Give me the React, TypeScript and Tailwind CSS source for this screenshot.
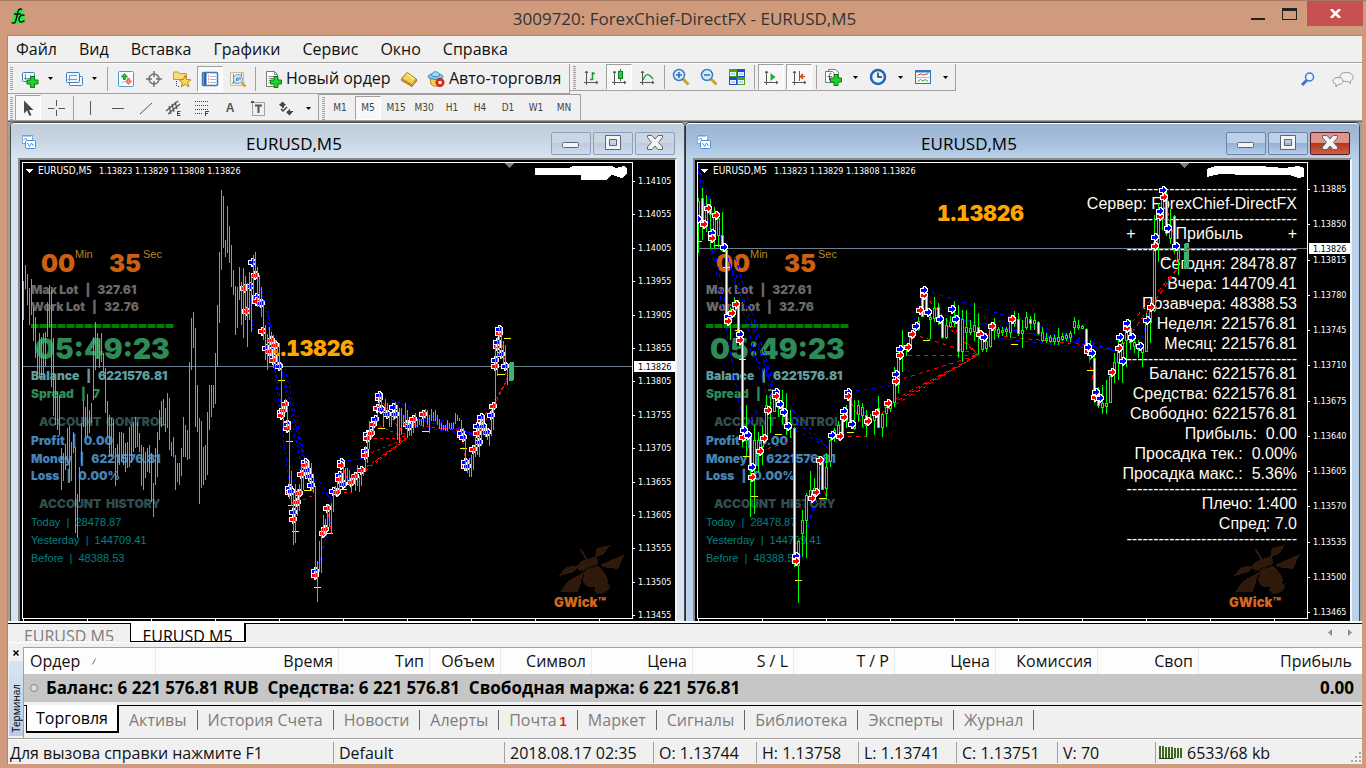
import React from "react";

const UI = "font-['Open_Sans','Noto_Sans',sans-serif]";
const TINY = "font-['DejaVu_Sans_Condensed','DejaVu_Sans',sans-serif]";

/* ------------------------------------------------------------------ */
/* Chart data                                                          */
/* ------------------------------------------------------------------ */

type Tone = "b" | "r";
type Candle = [hi: number, lo: number, top?: number, bottom?: number, filled?: number];

/* High/low pairs of the older bars, two pixels apart */
const HISTORY: [number, number][] = [
  [281, 320], [265, 289], [274, 305], [288, 325], [279, 315], [307, 341], [317, 358], [348, 378], [333, 378], [337, 378],
  [333, 375], [332, 367], [302, 337], [285, 327], [290, 387], [338, 416], [380, 425], [391, 430], [395, 435], [448, 490],
  [453, 481], [444, 470], [428, 463], [426, 482], [442, 481], [432, 453], [447, 533], [494, 538], [467, 502], [423, 463],
  [401, 427], [407, 438], [394, 437], [410, 433], [403, 423], [337, 400], [322, 370], [333, 358], [340, 368], [333, 362],
  [353, 372], [368, 413], [401, 437], [415, 457], [418, 457], [420, 455], [448, 486], [444, 476], [432, 465], [432, 462],
  [433, 465], [443, 472], [442, 468], [427, 467], [425, 462], [422, 452], [417, 448], [422, 447], [433, 452], [445, 486],
  [447, 490], [452, 478], [448, 472], [445, 473], [453, 502], [483, 517], [448, 485], [432, 477], [410, 440], [401, 427],
  [399, 425], [408, 432], [393, 428], [398, 450], [442, 456], [437, 457], [455, 490], [463, 482], [463, 485], [448, 476],
  [417, 457], [425, 457], [430, 460], [362, 459], [318, 370], [312, 348], [328, 427], [385, 432], [418, 504], [421, 488],
  [447, 485], [445, 480], [412, 475], [385, 430], [385, 417], [385, 408], [353, 404], [305, 367], [252, 323], [190, 270],
  [196, 248], [240, 257], [206, 253], [226, 263], [245, 287], [270, 295], [286, 335], [287, 328], [267, 300], [282, 325],
  [268, 338], [276, 320], [283, 347], [272, 320], [275, 332], [255, 300], [252, 277], [267, 307], [275, 307], [287, 317],
  [300, 340], [325, 360],
];

/* Recent candles, four pixels apart on the wide chart */
const CANDLES: Candle[] = [
  [198, 253, 201, 222], [188, 240, 198, 222, 1], [195, 232, 208, 226], [199, 249, 206, 214, 1], [207, 249, 214, 236],
  [212, 247, 218, 235], [212, 252, 235, 250, 1], [245, 320, 250, 316, 1], [307, 340, 310, 320], [297, 317, 302, 312],
  [300, 342, 303, 340, 1], [333, 447, 338, 428, 1], [405, 457, 430, 440], [435, 517, 437, 470, 1], [425, 514, 440, 465],
  [432, 472, 440, 450], [425, 465, 438, 446], [395, 440, 405, 438], [398, 433, 408, 412], [390, 412, 395, 411],
  [392, 417, 396, 407, 1], [390, 425, 402, 414, 1], [393, 435, 410, 427, 1], [410, 438, 425, 428], [427, 567, 428, 562, 1],
  [540, 603, 541, 565], [510, 557, 520, 533], [493, 558, 495, 520], [471, 501, 490, 497], [478, 500, 488, 494],
  [456, 492, 462, 490], [457, 490, 460, 489, 1], [453, 500, 467, 488], [435, 467, 440, 461], [428, 442, 430, 437],
  [421, 440, 425, 436], [411, 437, 415, 433, 1], [405, 428, 409, 420], [395, 427, 397, 423, 1], [400, 430, 423, 428],
  [400, 422, 405, 414], [403, 427, 407, 415], [410, 437, 415, 425, 1], [414, 424, 418, 420], [411, 435, 413, 420],
  [396, 428, 408, 427, 1], [413, 437, 414, 427], [403, 427, 407, 413], [400, 412, 403, 408], [367, 407, 372, 402],
  [350, 393, 355, 384], [330, 372, 345, 349], [344, 356, 347, 349], [333, 350, 337, 345], [326, 338, 329, 333],
  [317, 331, 321, 329], [287, 317, 296, 316, 1], [288, 313, 294, 311, 1], [311, 339, 317, 319], [297, 322, 308, 318],
  [303, 325, 307, 319, 1], [316, 339, 319, 337, 1], [318, 339, 325, 337], [316, 328, 322, 326], [301, 327, 316, 322],
  [305, 358, 318, 351, 1], [310, 362, 319, 351], [310, 350, 327, 332], [320, 335, 328, 332], [303, 341, 325, 331],
  [313, 355, 327, 333, 1], [333, 352, 338, 349], [333, 352, 341, 348], [323, 348, 327, 346], [318, 340, 326, 330],
  [327, 338, 329, 333], [327, 336, 330, 332], [327, 336, 329, 331], [317, 338, 320, 332], [311, 327, 318, 323],
  [313, 336, 319, 333, 1], [320, 348, 330, 333], [312, 330, 317, 327], [316, 330, 319, 323, 1], [313, 330, 320, 323],
  [321, 335, 322, 333, 1], [327, 342, 332, 340], [333, 343, 338, 340], [335, 343, 337, 341], [335, 345, 338, 341],
  [328, 345, 337, 341], [333, 341, 336, 339], [333, 341, 335, 338], [331, 342, 333, 337], [317, 334, 321, 327],
  [320, 330, 325, 327], [325, 329, 326, 328], [328, 350, 329, 347, 1], [340, 360, 345, 358], [353, 403, 358, 399, 1],
  [387, 408, 393, 405, 1], [385, 414, 403, 407], [380, 414, 403, 406], [370, 403, 376, 402], [353, 383, 362, 372],
  [337, 380, 345, 362], [337, 383, 343, 362], [322, 367, 328, 340], [320, 350, 328, 342, 1], [337, 353, 342, 346],
  [340, 358, 345, 349], [346, 367, 347, 352], [313, 352, 320, 351], [307, 343, 308, 322], [215, 312, 242, 310],
  [203, 262, 213, 243], [188, 230, 196, 218], [188, 236, 194, 233, 1], [209, 244, 225, 238], [215, 253, 216, 247, 1],
  [243, 275, 250, 259],
];

const MARKERS: [number, number, Tone][] = [
  [698, 219, "b"], [708, 208, "r"], [716, 215, "r"], [704, 224, "r"], [712, 233, "b"], [712, 238, "r"], [724, 247, "b"],
  [728, 316, "b"], [728, 321, "r"], [732, 313, "r"], [736, 304, "r"], [740, 334, "b"], [740, 340, "r"], [743, 437, "r"],
  [744, 430, "b"], [748, 435, "b"], [752, 467, "b"], [752, 477, "r"], [760, 451, "r"], [764, 438, "r"], [768, 410, "r"],
  [776, 392, "b"], [776, 396, "r"], [780, 404, "b"], [784, 412, "b"], [788, 426, "b"], [796, 556, "b"], [796, 561, "r"],
  [812, 498, "r"], [816, 492, "r"], [820, 460, "r"], [832, 435, "b"], [840, 436, "r"], [844, 411, "b"], [844, 417, "r"],
  [848, 392, "b"], [848, 396, "r"], [852, 424, "b"], [868, 421, "r"], [876, 413, "r"], [888, 403, "r"], [896, 374, "b"],
  [896, 381, "r"], [900, 349, "b"], [900, 355, "r"], [908, 347, "r"], [912, 334, "r"], [916, 326, "b"], [920, 310, "r"],
  [924, 295, "r"], [924, 290, "b"], [928, 312, "b"], [940, 319, "b"], [952, 309, "b"], [956, 319, "b"], [980, 334, "r"],
  [984, 337, "b"], [992, 326, "r"], [1012, 319, "r"], [1088, 351, "r"], [1088, 347, "b"], [1092, 353, "b"],
  [1095, 397, "r"], [1096, 392, "b"], [1100, 398, "b"], [1112, 372, "r"], [1123, 361, "b"], [1119, 348, "r"],
  [1120, 337, "b"], [1127, 328, "r"], [1127, 323, "b"], [1132, 337, "b"], [1140, 346, "b"], [1147, 320, "b"],
  [1151, 307, "r"], [1155, 246, "r"], [1155, 237, "b"], [1160, 216, "r"], [1160, 211, "b"], [1164, 197, "r"],
  [1163, 190, "b"], [1168, 228, "b"], [1176, 246, "b"],
];

const EARLY_MARKERS: [number, number, Tone][] = [
  [252, 262, "b"], [255, 275, "r"], [244, 288, "r"], [250, 286, "b"], [246, 311, "r"], [256, 297, "b"], [256, 301, "r"],
  [261, 303, "b"], [262, 331, "r"],
];

const TRADES: [number, number, number, number, Tone][] = [
  [698, 165, 724, 247, "b"], [700, 180, 728, 316, "b"], [698, 170, 744, 430, "b"], [733, 250, 776, 392, "b"],
  [727, 255, 772, 388, "b"], [736, 275, 774, 390, "b"], [740, 334, 770, 380, "b"], [728, 258, 768, 400, "b"],
  [776, 392, 828, 448, "b"], [784, 412, 828, 448, "b"], [788, 426, 826, 446, "b"], [772, 392, 744, 430, "b"],
  [796, 556, 826, 480, "b"], [800, 558, 828, 448, "b"], [848, 392, 896, 385, "b"], [852, 424, 884, 394, "b"],
  [924, 290, 1118, 351, "b"], [928, 312, 1118, 351, "b"], [952, 309, 1118, 351, "b"], [956, 319, 1116, 351, "b"],
  [984, 337, 1116, 351, "b"], [900, 349, 926, 296, "b"], [1100, 398, 1120, 352, "b"], [1140, 346, 1150, 310, "b"],
  [760, 451, 792, 441, "r"], [770, 400, 792, 438, "r"], [744, 432, 752, 470, "r"], [812, 498, 826, 500, "r"],
  [820, 460, 826, 500, "r"], [840, 436, 867, 436, "r"], [848, 396, 867, 434, "r"], [924, 295, 978, 355, "r"],
  [940, 319, 978, 355, "r"], [912, 334, 978, 355, "r"], [900, 355, 978, 355, "r"], [896, 381, 978, 355, "r"],
  [888, 403, 978, 355, "r"], [884, 408, 978, 355, "r"], [868, 421, 978, 355, "r"], [980, 334, 1088, 345, "r"],
  [1088, 351, 1096, 398, "r"], [1127, 328, 1178, 268, "r"], [1123, 345, 1178, 268, "r"], [1151, 307, 1178, 268, "r"],
  [1164, 197, 1176, 246, "r"], [1168, 228, 1178, 268, "r"],
];

const LEVELS: [number, number][] = [
  [698, 241], [717, 245], [726, 267], [738, 330], [742, 359], [926, 340], [1014, 344], [778, 434], [746, 456],
  [754, 496], [798, 580], [850, 432], [822, 498], [1090, 370], [1166, 259],
];

const COLORS = { b: "#0000ff", r: "#ff0000" } as const;

/* Wide-chart coordinates to the two-pixel chart's coordinates */
const nx = (x: number) => Math.round(507 - (1178 - x) / 2);
const ny = (y: number) => Math.round(367 + (y - 248) * 0.663);

function Marker({ x, y, tone }: { x: number; y: number; tone: Tone }) {
  return (
    <path
      d={`M${x - 3},${y - 1.5}h2.500v-2h1l3,3.500l-3,3.500h-1v-2h-2.500z`}
      fill={COLORS[tone]}
      stroke="#fff"
      strokeWidth="2"
      paintOrder="stroke"
    />
  );
}

function Firefly() {
  return (
    <g transform="translate(554 545)" fill="#2f190b" stroke="#2f190b">
      <path d="M43 3 56 0 50 9 41 12z" strokeWidth="0" />
      <path d="M46 20 71 9 64 24 48 22z" strokeWidth="0" />
      <path d="M5 31 12 22 26 20 20 27z" strokeWidth="0" />
      <path d="M6 47 14 36 30 27 24 47z" strokeWidth="0" />
      <path d="M24 25C22 19 28 15 33 14L39 12C44 10 45 17 43 20L36 23 29 26z" strokeWidth="0" />
      <path d="M31 25 44 21C49 25 54 31 54 36 52 41 47 41 40 42 33 44 29 38 29 34z" strokeWidth="0" />
      <path d="M27 5 33 15" strokeWidth="2" fill="none" />
      <circle cx="27" cy="5" r="1" />
      <ellipse cx="48" cy="43" rx="8" ry="5" transform="rotate(-25 48 43)" strokeWidth="0" />
      <path d="M40 49C50 50 57 45 56 38M25 27 42 19" stroke="#1c0f06" strokeWidth="1" fill="none" />
    </g>
  );
}

function PriceLabel({ x, y }: { x: number; y: number }) {
  return (
    <text x={x} y={y} fill="#ffa500" className="font-['Inter','DejaVu_Sans',sans-serif] text-[21px] font-black tabular-nums">
      1.13826
    </text>
  );
}

function NarrowPlot() {
  return (
    <svg className="absolute inset-0 h-full w-full" shapeRendering="crispEdges" aria-label="EURUSD M5 bars">
      <g transform="translate(-23 -163)">
        <Firefly />
        <PriceLabel x={267} y={356} />
        <path d="M23 366.5H632" stroke="#708090" />
        {TRADES.map(([a, b, c, d, t], i) => (
          <path key={i} d={`M${nx(a)} ${ny(b)}L${nx(c)} ${ny(d)}`} stroke={COLORS[t]} strokeDasharray="3 3" />
        ))}
        <path d="M254 265 270 318M258 280 272 330M250 300 253 330" stroke="#0000ff" strokeDasharray="2 2" fill="none" />
        {EARLY_MARKERS.concat(MARKERS.map(([x, y, t]) => [nx(x) - 1, ny(y), t] as [number, number, Tone])).map(([x, y, t], i) => (
          <Marker key={i} x={x} y={y} tone={t} />
        ))}
        {LEVELS.slice(2).map(([x, y], i) => (
          <path key={i} d={`M${nx(x) - 3} ${ny(y) + 0.5}h7`} stroke="#ffff00" />
        ))}
        <path d="M504 338.5h7" stroke="#ffff00" />
        <path
          stroke="#00ff00"
          d={HISTORY.map(([h, l], i) => `M${23.5 + i * 2} ${h}V${l}`).join("") +
            CANDLES.map(([h, l], i) => `M${267.5 + i * 2} ${ny(h)}V${ny(l)}`).join("")}
        />
        <rect x="509" y="362" width="5" height="19" rx="2" fill="#3cb371" />
        <path d="M504 163h10l-5 5z" fill="#708090" />
        <path d="M535 168H569L573 166H612L616 168 624 166 627 169V174L622 178 612 175 606 180H581V175H535z" fill="#fff" />
        <path d="M26 169h7l-3.500 4z" fill="#fff" />
      </g>
    </svg>
  );
}

function WidePlot() {
  return (
    <svg className="absolute inset-0 h-full w-full" shapeRendering="crispEdges" aria-label="EURUSD M5 candles">
      <g transform="translate(-698 -163)">
        <g transform="translate(675 0)">
          <Firefly />
        </g>
        <PriceLabel x={937} y={221} />
        <path d="M698 248.500H1307" stroke="#708090" />
        {TRADES.map(([a, b, c, d, t], i) => (
          <path key={i} d={`M${a} ${b}L${c} ${d}`} stroke={COLORS[t]} strokeDasharray="4 4" />
        ))}
        {CANDLES.map(([h, l, t = h, b = l, f], i) => (
          <g key={i} stroke="#00ff00">
            <path d={`M${698.5 + i * 4} ${h}V${l}`} />
            <rect x={697.5 + i * 4} y={t + 0.5} width="2" height={Math.max(1, b - t)} fill={f ? "#ffffff" : "#000000"} />
          </g>
        ))}
        {LEVELS.map(([x, y], i) => (
          <path key={i} d={`M${x - 3} ${y + 0.5}h7`} stroke="#ffff00" />
        ))}
        {MARKERS.map(([x, y, t], i) => (
          <Marker key={i} x={x} y={y} tone={t} />
        ))}
        <rect x="1184" y="243" width="5" height="26" rx="2" fill="#3cb371" />
        <path d="M1183 251.500h4M1187 248.500h3" stroke="#ff0000" />
        <path d="M1179 163h10l-5 5z" fill="#708090" />
        <path d="M1207 169 1215 166H1260L1284 168 1298 166 1304 168V177L1298 178 1290 175H1250L1220 174 1207 177z" fill="#fff" />
        <path d="M701 169h7l-3.500 4z" fill="#fff" />
      </g>
    </svg>
  );
}

/* ------------------------------------------------------------------ */
/* Text panels drawn on the charts                                     */
/* ------------------------------------------------------------------ */

function HudLine({ name, value, tone, tight }: { name: string; value: string; tone: string; tight?: boolean }) {
  return (
    <div className={`flex gap-[7px] ${tight ? "h-[17px]" : "h-[18px]"} ${tone}`}>
      <span>{name}</span>
      <span>|</span>
      <span>{value}</span>
    </div>
  );
}

function AccountHud() {
  const small = "font-['Liberation_Sans',sans-serif] text-[11px] font-normal";
  return (
    <div className="absolute left-2 top-[85px] flex flex-col whitespace-pre font-['Inter','DejaVu_Sans',sans-serif] text-[12px] font-black leading-[18px]">
      <div className="flex h-8 items-start pl-2.5 text-[#cd6010]">
        <span className="w-[34px] text-[24px] leading-8">00</span>
        <span className={`w-[34px] leading-3 text-[#b8861b] ${small}`}>Min</span>
        <span className="w-[34px] text-[24px] leading-8">35</span>
        <span className={`leading-3 text-[#b8861b] ${small}`}>Sec</span>
      </div>
      <div className="h-px" />
      <HudLine name="Max Lot" value="327.61" tone="text-[#696969]" tight />
      <HudLine name="Work Lot" value="32.76" tone="text-[#696969]" />
      <div className="mt-2 h-1 w-[143px] bg-[repeating-linear-gradient(90deg,#008000_0_7px,#003800_7px_9px)]" />
      <div className="mt-[3px] pl-1 text-[28px] leading-9 text-[#2e8b57]">05:49:23</div>
      <HudLine name="Balance" value="6221576.81" tone="text-[#5f9ea0]" />
      <HudLine name="Spread" value="7" tone="text-[#2e8b57]" />
      <div className="mt-2.5 pl-2 text-[#2f4f4f]">ACCOUNT  CONTROL</div>
      <div className="h-px" />
      <HudLine name="Profit" value="0.00" tone="text-[#4682b4]" />
      <HudLine name="Money" value="6221576.81" tone="text-[#4682b4]" tight />
      <HudLine name="Loss" value="0.00%" tone="text-[#4682b4]" />
      <div className="mt-2.5 pl-2 text-[#2f4f4f]">ACCOUNT  HISTORY</div>
      <div className={`text-[#008080] ${small}`}>
        <div>Today  |  28478.87</div>
        <div>Yesterday  |  144709.41</div>
        <div>Before  |  48388.53</div>
      </div>
    </div>
  );
}

const DASHES = "--------------------------------";

function ServerPanel() {
  const rows = [
    DASHES, "Сервер: ForexChief-DirectFX", DASHES, "+         Прибыль          +", DASHES,
    "Сегодня: 28478.87", "Вчера: 144709.41", "Позавчера: 48388.53", "Неделя: 221576.81", "Месяц: 221576.81", DASHES,
    "Баланс: 6221576.81", "Средства: 6221576.81", "Свободно: 6221576.81", "Прибыль:  0.00", "Просадка тек.:  0.00%",
    "Просадка макс.:  5.36%", DASHES, "Плечо: 1:400", "Спред: 7.0", DASHES,
  ];
  return (
    <div className="absolute right-2.5 top-[21px] flex flex-col whitespace-pre text-right font-['Liberation_Sans',sans-serif] text-[16px] text-[#fffaf0]">
      {rows.map((r, i) => (
        <div key={i} className={r === DASHES ? "h-2.5 leading-[10px]" : "h-5 leading-5"}>
          {r}
        </div>
      ))}
    </div>
  );
}

/* ------------------------------------------------------------------ */
/* MDI windows                                                         */
/* ------------------------------------------------------------------ */

function WindowIcon() {
  return (
    <svg width="16" height="16" viewBox="0 0 16 16" fill="none">
      <rect x="1.500" y="1.500" width="10" height="8" fill="#fff" stroke="#7aaee6" />
      <path d="M3 1v2M5 1v2M7 1v2M9 1v2M2.500 6l2-2 2 3" stroke="#4f94e0" />
      <rect x="4.500" y="6.500" width="10" height="8" rx="1" fill="#fff" stroke="#4a90e2" />
      <path d="M6.500 9l2 3.500 2-3.500 2 3" stroke="#4f94e0" />
    </svg>
  );
}

function CaptionButton({ kind, active, label }: { kind: "min" | "max" | "close"; active: boolean; label: string }) {
  const look =
    kind === "close" && active
      ? "border-[#5a1a20] bg-[linear-gradient(#dd968c_0_45%,#b3371f_50%,#c9604a_100%)]"
      : active
        ? "border-[#6e85a8] bg-[linear-gradient(#bdd2ea_0_45%,#95b1d3_50%,#b4cdea_100%)]"
        : "border-[#8c9fbc] bg-[linear-gradient(#c9d6e4_0_45%,#bccbdf_50%,#cfdbe9_100%)]";
  return (
    <button aria-label={label} className={`flex h-[23px] w-10 items-center justify-center rounded-[2px] border ${look}`}>
      <svg width="20" height="18" viewBox="0 0 20 18" fill="none">
        {kind === "min" && <rect x="1.500" y="8.500" width="16" height="5" rx="1" fill="#f4f4f4" stroke="#5b6478" />}
        {kind === "max" && (
          <path d="M2.500 1.500h15v14h-15zM6.500 5.500v6h7v-6z" fill="#f4f4f4" fillRule="evenodd" stroke="#5b6478" />
        )}
        {kind === "close" && (
          <path
            d="M2.500 1.500h4.500L10 5l3-3.500h4.500v2L13.500 8.500l4 4.500v2.500h-4.500l-3-3.500-3 3.500H2.500V13l4-4.500-4-5z"
            fill="#f4f4f4"
            stroke="#5b6478"
          />
        )}
      </svg>
    </button>
  );
}

function ChartWindow({ active, plot, panel, first, step, count, price, priceTop }: {
  active: boolean;
  plot: React.ReactNode;
  panel?: React.ReactNode;
  first: number;
  step: number;
  count: number;
  price: number[];
  priceTop: number;
}) {
  return (
    <section
      className={`flex min-w-0 flex-1 flex-col rounded-t-[5px] border border-b-0 ${
        active ? "border-[#303030] border-r-[#1a6070] bg-[#b9d1ea]" : "border-[#4a4a4a] bg-[#d7e4f2]"
      }`}
    >
      <header
        className={`flex h-[35px] items-center gap-0.5 rounded-t-[4px] border-t border-white pl-2.5 pr-[9px] pt-0.5 ${
          active ? "bg-[linear-gradient(#99b4d1,#a5bedb_50%,#b9d1ea)]" : "bg-[linear-gradient(#bfcddb,#c8d5e3_50%,#d7e4f2)]"
        }`}
      >
        <WindowIcon />
        <h2 className="flex-1 pt-[3px] text-center text-[17px] leading-6 text-black">EURUSD,M5</h2>
        <div className="flex gap-0.5 pt-0.5">
          <CaptionButton kind="min" active={active} label="Свернуть" />
          <CaptionButton kind="max" active={active} label="Развернуть" />
          <CaptionButton kind="close" active={active} label="Закрыть окно" />
        </div>
      </header>
      <div className="mx-[7px] flex min-h-0 flex-1 border-x-2 border-t-2 border-l-[#8a8a8a] border-r-[#f4f4f4] border-t-[#8a8a8a] bg-black pl-0.5 pt-0.5">
        <div className="flex min-w-0 flex-1 flex-col">
          <div className="relative min-h-0 flex-1 overflow-hidden border border-white">
            <div className={`absolute left-[15px] top-px flex whitespace-pre text-[9px] leading-[14px] text-white ${TINY}`}>
              <span className="w-[61px] text-[10px]">EURUSD,M5</span>
              <span>1.13823 1.13829 1.13808 1.13826</span>
            </div>
            <AccountHud />
            {panel}
            {plot}
            <div className="absolute bottom-2 left-[531px] font-['Inter',sans-serif] text-[13px] font-black leading-4 text-[#d2691e]">
              GWick™
            </div>
          </div>
          <div className="h-0.5 bg-[repeating-linear-gradient(90deg,#000_0_1px,#fff_1px_2px,#000_2px_64px)]" />
        </div>
        <svg className={`h-full w-[42px] shrink-0 overflow-hidden ${TINY} text-[9px]`} shapeRendering="crispEdges">
          {Array.from({ length: count }, (_, i) => {
            const y = Math.round(first + i * step) - 162;
            return (
              <g key={i}>
                <path d={`M0 ${y + 0.5}h2`} stroke="#fff" />
                <text x="5" y={y + 3} fill="#fff">
                  {(price[0] - i * price[1]).toFixed(5)}
                </text>
              </g>
            );
          })}
          <rect x="1" y={priceTop - 162} width="41" height="11" fill="#fff" />
          <text x="5" y={priceTop - 153} fill="#000">
            1.13826
          </text>
        </svg>
      </div>
    </section>
  );
}

/* ------------------------------------------------------------------ */
/* Toolbar icons                                                       */
/* ------------------------------------------------------------------ */

const Svg = ({ children, w = 18 }: { children: React.ReactNode; w?: number }) => (
  <svg width={w} height="18" viewBox={`0 0 ${w} 18`} fill="none" className="shrink-0">
    {children}
  </svg>
);

const Plus = ({ x, y }: { x: number; y: number }) => (
  <path d={`M${x} ${y}h4v3.500h3.500v4h-3.500v3.500h-4v-3.500h-3.500v-4h3.500z`} fill="#22d030" stroke="#0a7a12" strokeWidth="1" />
);
const Axes = () => <path d="M4.500 3v14M2 14.500h14M3 5l1.500-2L6 5M14 13l2 1.500-2 1.500" stroke="#555" />;

const icons = {
  newChart: (
    <Svg>
      <rect x="1.500" y="2.500" width="12" height="9" rx="1" fill="#f6fbff" stroke="#3d7fb0" />
      <path d="M4.500 4v6M3 8.500h8M9.500 5v5" stroke="#6a8aa5" />
      <Plus x={9.5} y={6.5} />
    </Svg>
  ),
  profiles: (
    <Svg>
      <rect x="4.500" y="6.500" width="13" height="9" rx="1" fill="#fff" stroke="#3d7fc0" />
      <rect x="1.500" y="2.500" width="13" height="10" rx="1" fill="#eaf4fd" stroke="#3d7fc0" />
      <path d="M4.500 5v6M3 9.500h9M4 5.500h8" stroke="#7a9ab5" />
    </Svg>
  ),
  market: (
    <Svg>
      <rect x="1.500" y="1.500" width="15" height="15" rx="1" fill="#fafdff" stroke="#4f9ad0" />
      <path d="M4 5h2M4 8h1M12 12h2M4 12h4" stroke="#bcd" />
      <path d="M6.500 9.500V7H4.500l3-3.500 3 3.500h-2v2.500z" fill="#29c030" stroke="#0c8a18" strokeWidth=".8" />
      <path d="M10.500 8.500V11H8.500l3 3.500 3-3.500h-2V8.500z" fill="#ff9a70" stroke="#d8401a" strokeWidth=".8" />
    </Svg>
  ),
  target: (
    <Svg>
      <circle cx="9" cy="9" r="5" stroke="#707070" strokeWidth="1.500" />
      <path d="M9 1v6M9 11v6M1 9h6M11 9h6" stroke="#707070" strokeWidth="1.500" />
    </Svg>
  ),
  favorites: (
    <Svg w={20}>
      <path d="M1.500 3.500V2h5l1 1.500h7v6h-13z" fill="#f7dc77" stroke="#c69a2a" />
      <path d="M4.500 11v6M6 16.500h2" stroke="#444" strokeDasharray="1 1" />
      <path d="M13 5.500l1.700 4 4.300.3-3.300 2.700 1.200 4.300-3.900-2.400-3.700 2.400 1-4.300L7 9.800l4.400-.3z" fill="#ffd45a" stroke="#b8861a" />
    </Svg>
  ),
  navigator: (
    <Svg>
      <rect x="1.500" y="2.500" width="15" height="13" rx="1" fill="#fff" stroke="#3878bc" strokeWidth="1.500" />
      <path d="M4 3v12" stroke="#2a62a8" strokeWidth="3" />
      <path d="M7 6h1M7 9h1M7 12h1" stroke="#e03030" />
      <path d="M9 6.500h6M9 9.500h6M9 12.500h6" stroke="#9fb8d8" />
    </Svg>
  ),
  tester: (
    <Svg>
      <path d="M1.500 2.500h13v13h-13z" fill="#f6f3ea" stroke="#c5bda8" />
      <path d="M4.500 4v9M12.500 3v4M3 13h5" stroke="#6b8aa5" />
      <circle cx="9" cy="9" r="4.500" fill="#cfe6fb" fillOpacity=".85" stroke="#7aa4cc" />
      <path d="M9 7v4M7.500 8v3M11 7v3" stroke="#4d7ba8" />
      <path d="M12.500 12.500l4 4" stroke="#d2a338" strokeWidth="2.500" />
    </Svg>
  ),
  order: (
    <Svg>
      <path d="M2.500 1.500h8l3 3v12h-11z" fill="#fff" stroke="#777" />
      <path d="M10.500 1.500v3h3M4.500 6.500h6M4.500 8.500h5M4.500 10.500h3M4.500 12.500h3" stroke="#888" />
      <Plus x={10} y={6.5} />
    </Svg>
  ),
  book: (
    <Svg>
      <path d="M7 2.500 16.500 9 12 14.500 1.500 8.500z" fill="#f2cf55" stroke="#a97a16" />
      <path d="M1.500 8.500v2L12 16.500v-2M12 16.500l4.500-5.500V9" fill="#c9922a" stroke="#a97a16" />
      <path d="M7 4l7 5" stroke="#fff2b0" strokeWidth="1.500" />
    </Svg>
  ),
  auto: (
    <Svg>
      <path d="M3 8h12l-1 6c-2 3-8 3-10 0z" fill="#f5cf58" stroke="#bb8d20" />
      <ellipse cx="8.500" cy="6.500" rx="7.500" ry="3" fill="#7cc2e8" stroke="#3f8fbd" />
      <path d="M4.500 5.500c0-5 8-5 8 0-2 1.500-6 1.500-8 0z" fill="#a8daf4" stroke="#3f8fbd" />
      <circle cx="13" cy="12.500" r="4.200" fill="#e02818" stroke="#a01208" strokeWidth=".5" />
      <rect x="11.500" y="11" width="3" height="3" fill="#fff" />
    </Svg>
  ),
  bars: (
    <Svg>
      <Axes />
      <path d="M10.500 4v8M8 11.500h2.500M10.500 5.500H13" stroke="#1c9a2a" strokeWidth="1.500" />
    </Svg>
  ),
  candle: (
    <Svg>
      <Axes />
      <path d="M10.500 1v12" stroke="#137a1e" />
      <rect x="8.500" y="3.500" width="4" height="7" fill="#1fd030" stroke="#137a1e" />
    </Svg>
  ),
  line: (
    <Svg>
      <Axes />
      <path d="M5 12C8 5 10 5 15 11" stroke="#2aa03a" strokeWidth="1.500" />
    </Svg>
  ),
  zoomIn: (
    <Svg>
      <path d="M11 11l5.500 5.500" stroke="#d0a030" strokeWidth="3" />
      <circle cx="7" cy="7" r="5.500" fill="#d4ebfb" stroke="#3a7fc0" strokeWidth="1.500" />
      <path d="M4 7h6M7 4v6" stroke="#2a70b8" strokeWidth="1.500" />
    </Svg>
  ),
  zoomOut: (
    <Svg>
      <path d="M11 11l5.500 5.500" stroke="#d0a030" strokeWidth="3" />
      <circle cx="7" cy="7" r="5.500" fill="#d4ebfb" stroke="#3a7fc0" strokeWidth="1.500" />
      <path d="M4 7h6" stroke="#2a70b8" strokeWidth="1.500" />
    </Svg>
  ),
  tile: (
    <Svg>
      <rect x="1" y="1" width="8" height="8" fill="#47a31e" />
      <rect x="9" y="1" width="8" height="8" fill="#1d50c8" />
      <rect x="1" y="9" width="8" height="8" fill="#1d50c8" />
      <rect x="9" y="9" width="8" height="8" fill="#47a31e" />
      <path d="M2 4h6v4H2zM10 4h6v4h-6zM2 12h6v4H2zM10 12h6v4h-6z" fill="#eef4ff" />
      <path d="M3 6h4M11 6h4M3 14h4M11 14h4" stroke="#8fb0e0" />
    </Svg>
  ),
  scroll: (
    <Svg>
      <Axes />
      <path d="M8.500 5l5 4-5 4z" fill="#22b030" />
    </Svg>
  ),
  shift: (
    <Svg>
      <Axes />
      <path d="M9.500 3v10" stroke="#3a6da8" />
      <path d="M15 8.500h-5M13 6l-2.500 2.500L13 11" stroke="#d04818" strokeWidth="1.500" />
    </Svg>
  ),
  indicators: (
    <Svg>
      <path d="M4.500 1.500h7l3 3v9h-10z" fill="#fff" stroke="#777" />
      <path d="M1.500 3.500h7l2 2v9h-9z" fill="#fff" stroke="#777" />
      <path d="M7.500 5.500c-2-1-2 1-2 2v5M3.500 8.500h4" stroke="#555" />
      <Plus x={10} y={6.5} />
    </Svg>
  ),
  clock: (
    <Svg>
      <circle cx="9" cy="9" r="7" fill="#e8f4ff" stroke="#1f66b8" strokeWidth="2.500" />
      <path d="M9 4.500V9h4" stroke="#333" strokeWidth="1.500" />
    </Svg>
  ),
  template: (
    <Svg>
      <rect x="1.500" y="2.500" width="15" height="13" fill="#fafdff" stroke="#2f74b8" />
      <path d="M1 3.500h16" stroke="#2f74b8" strokeWidth="2" />
      <path d="M2 9.500h14" stroke="#9fc0e0" />
      <path d="M3.500 7.500l3-1.500 3 1 5-1.500" stroke="#c04030" />
      <path d="M3.500 13.500l3-2 2.500 1.500 2-1.500 3 2" stroke="#3aa040" />
    </Svg>
  ),
  cursor: (
    <Svg>
      <path d="M5 1.500v13l3-3 2.500 5.500 2-1L10 11h4.500z" fill="#4a4a4a" />
    </Svg>
  ),
  cross: (
    <Svg>
      <path d="M9.500 1v6M9.500 11v6M1 9.500h6.500M11.500 9.500H18" stroke="#555" />
    </Svg>
  ),
  vline: <Svg><path d="M9.500 2v14" stroke="#555" /></Svg>,
  hline: <Svg><path d="M3 9.500h12" stroke="#555" /></Svg>,
  diag: <Svg><path d="M3 15 15 4" stroke="#555" /></Svg>,
  channel: (
    <Svg>
      <path d="M1 12 13 2M3 15 15 5M4 7l2 8M7 5l2 8M10 3l2 7" stroke="#555" strokeWidth="1.200" />
      <path d="M15.500 12.500h-3v4h3M12 14.500h3" stroke="#444" />
    </Svg>
  ),
  fibo: (
    <Svg>
      <path d="M2 2.500h14M2 6.500h14M2 10.500h14M2 14.500h7" stroke="#444" strokeDasharray="1 1" />
      <path d="M12.500 17v-4.500H16M12.500 14.500H15" stroke="#444" />
    </Svg>
  ),
  label: (
    <Svg>
      <rect x="3.500" y="3.500" width="12" height="13" stroke="#555" strokeDasharray="1 1" />
      <path d="M6 6.500h7M9.500 6v8" stroke="#555" strokeWidth="2" />
      <path d="M2 2h3v2H2z" fill="#555" />
    </Svg>
  ),
  arrows: (
    <Svg>
      <path d="M2 6 5.500 2.500 9 6H7v2.500L5.500 10V7z" fill="#444" />
      <path d="M10 13 13 9.500V12h3l-3.500 4.500L9 13z" fill="#444" />
      <path d="M2 5.500h7l-3.500 3zM9.500 12h7L13 15.500z" fill="#444" />
      <path d="M4 10l2 2 4-4" stroke="#444" strokeWidth="1.500" />
    </Svg>
  ),
};

function Tool({ icon, label, on }: { icon: keyof typeof icons; label: string; on?: boolean }) {
  return (
    <button
      aria-label={label}
      aria-pressed={on}
      className={`mx-px flex h-[26px] w-[26px] shrink-0 items-center justify-center border ${
        on ? "border-[#a0a0a0] border-b-white border-r-white bg-[#f8f8f8]" : "border-transparent"
      }`}
    >
      {icons[icon]}
    </button>
  );
}

const Drop = ({ label, tight }: { label: string; tight?: boolean }) => (
  <button aria-label={label} className={`flex h-6 shrink-0 items-center justify-center ${tight ? "mr-1 w-3" : "w-[17px]"}`}>
    <svg width="5" height="3" viewBox="0 0 5 3"><path d="M0 0h5L2.500 3z" fill="#000" /></svg>
  </button>
);
const Sep = () => <div className="ml-[3px] mr-0.5 h-6 w-px shrink-0 bg-[#a0a0a0]" />;
const Grip = () => (
  <div className="h-[23px] w-[3px] shrink-0 bg-[repeating-linear-gradient(#a0a0a0_0_1px,#f0f0f0_1px_2px)]" />
);

const MENU = ["Файл", "Вид", "Вставка", "Графики", "Сервис", "Окно", "Справка"];
const FRAMES = ["M1", "M5", "M15", "M30", "H1", "H4", "D1", "W1", "MN"];

function Toolbars() {
  return (
    <div className="flex h-14 flex-col">
      <div className="flex h-[30px]">
        <div className="flex items-center border-b border-r border-[#a0a0a0] pl-0.5 pr-2">
          <Grip />
          <div className="w-[3px]" />
          <Tool icon="newChart" label="Новый график" />
          <Drop label="Список графиков" tight />
          <Tool icon="profiles" label="Профили" />
          <Drop label="Список профилей" tight />
          <Sep />
          <div className="w-[2px]" />
          <Tool icon="market" label="Обзор рынка" />
          <Tool icon="target" label="Окно данных" />
          <Tool icon="favorites" label="Избранное" />
          <Tool icon="navigator" label="Навигатор" on />
          <Tool icon="tester" label="Тестер стратегий" />
          <Sep />
          <button className="flex items-center gap-1 whitespace-nowrap pl-1.5 text-[16px] leading-6 text-[#111]">
            {icons.order}
            <span className="w-[109px] pb-0.5 text-left">Новый ордер</span>
          </button>
          <Tool icon="book" label="Редактор" />
          <button className="flex items-center gap-1 whitespace-nowrap pl-1 text-[16px] leading-6 text-[#111]">
            {icons.auto}
            <span className="pb-0.5">Авто-торговля</span>
          </button>
        </div>
        <div className="flex h-[27px] items-center border-b border-r border-[#a0a0a0] pl-[3px] pr-px">
          <Grip />
          <div className="w-px" />
          <Tool icon="bars" label="Бары" />
          <Tool icon="candle" label="Свечи" on />
          <Tool icon="line" label="Линия" />
          <Sep />
          <Tool icon="zoomIn" label="Увеличить" />
          <Tool icon="zoomOut" label="Уменьшить" />
          <Tool icon="tile" label="Расположить окна" />
          <Sep />
          <Tool icon="scroll" label="Автопрокрутка" on />
          <Tool icon="shift" label="Сдвиг графика" on />
          <Sep />
          <Tool icon="indicators" label="Индикаторы" />
          <Drop label="Список индикаторов" />
          <Tool icon="clock" label="Периоды" />
          <Drop label="Список периодов" />
          <Tool icon="template" label="Шаблоны" />
          <Drop label="Список шаблонов" />
        </div>
        <div className="ml-auto flex items-center gap-4 pr-2">
          <button aria-label="Поиск">
            <svg width="16" height="16" viewBox="0 0 16 16" fill="none">
              <path d="M2 14l5-5" stroke="#4a6fc8" strokeWidth="3" />
              <circle cx="9.500" cy="6" r="4" fill="#eef4ff" stroke="#3f74d8" strokeWidth="1.500" />
            </svg>
          </button>
          <button aria-label="Сообщения">
            <svg width="22" height="17" viewBox="0 0 22 17" fill="#f4f4f4" stroke="#999">
              <path d="M14.500 1.500c4 0 6.500 2 6.500 4.500 0 2-1 3-2.500 4v2.500L16 10.500c-5 .3-8-1.500-8-4.500s2.500-4.500 6.500-4.500z" />
              <path d="M6 6.500c3.500 0 5 1.500 5 3.500s-2 3.500-5 3.500L4 16v-3c-2-.5-3-1.500-3-3 0-2 2-3.500 5-3.500z" />
            </svg>
          </button>
        </div>
      </div>
      <div className="flex h-[26px] items-center">
        <div className="flex h-full items-center border-r border-[#a0a0a0] pl-0.5 pr-px pt-0.5">
          <Grip />
          <div className="w-px" />
          <Tool icon="cursor" label="Курсор" on />
          <Tool icon="cross" label="Перекрестие" />
          <Sep />
          <Tool icon="vline" label="Вертикальная линия" />
          <Tool icon="hline" label="Горизонтальная линия" />
          <Tool icon="diag" label="Трендовая линия" />
          <Tool icon="channel" label="Канал" />
          <Tool icon="fibo" label="Уровни Фибоначчи" />
          <button className="w-7 text-center font-['Liberation_Sans',sans-serif] text-[12px] font-bold text-[#555]">A</button>
          <Tool icon="label" label="Текстовая метка" />
          <Tool icon="arrows" label="Стрелки" />
          <Drop label="Список стрелок" />
        </div>
        <div className="flex h-full items-center border-r border-t border-[#a0a0a0] pl-[3px] pr-0.5 pt-px">
          <Grip />
          <div className="w-px" />
          {FRAMES.map((f) => (
            <button
              key={f}
              className={`mx-px h-6 w-[26px] border text-center text-[10px] leading-5 text-[#444] ${TINY} ${
                f === "M5" ? "border-[#a0a0a0] border-b-white border-r-white bg-[#f8f8f8]" : "border-transparent"
              }`}
            >
              {f}
            </button>
          ))}
        </div>
      </div>
    </div>
  );
}

/* ------------------------------------------------------------------ */
/* Terminal                                                            */
/* ------------------------------------------------------------------ */

const TABS = ["Активы", "История Счета", "Новости", "Алерты", "Почта", "Маркет", "Сигналы", "Библиотека", "Эксперты", "Журнал"];

function Terminal() {
  return (
    <div className="flex h-[91px] shrink-0 bg-[#f0f0f0]">
      <div className="flex w-[15px] shrink-0 flex-col items-center">
        <button aria-label="Закрыть панель" className="flex h-3 w-full items-center justify-center">
          <svg width="6" height="6" viewBox="0 0 6 6"><path d="M.5.500l5 5m0-5l-5 5" stroke="#000" strokeWidth="1.500" /></svg>
        </button>
        <div className="mb-0.5 mt-0.5 flex w-[14px] flex-1 items-center justify-start bg-[linear-gradient(#d7e4f2,#b9cde4)] pb-[3px] text-[10px] leading-[14px] text-black [writing-mode:sideways-lr]">
          Терминал
        </div>
      </div>
      <div className="flex min-w-0 flex-1 flex-col border-l border-t border-[#a0a0a0]">
        <table className="w-full table-fixed border-separate border-spacing-0 whitespace-pre text-[16px] leading-[26px] text-[#111]">
          <colgroup>
            <col className="w-[132px]" />
            <col className="w-[183px]" />
            <col className="w-[91px]" />
            <col className="w-[71px]" />
            <col className="w-[91px]" />
            <col className="w-[101px]" />
            <col className="w-[101px]" />
            <col className="w-[101px]" />
            <col className="w-[101px]" />
            <col className="w-[102px]" />
            <col className="w-[101px]" />
            <col />
          </colgroup>
          <thead className="bg-[#fdfdfd]">
            <tr>
              <th className="border-r border-[#e3ebf5] p-0 pl-1.5 text-left font-normal">
                <span className="flex items-center gap-3">
                  Ордер
                  <svg width="5" height="7" viewBox="0 0 5 7"><path d="M.5 6.500 3.500.500" stroke="#777" /></svg>
                </span>
              </th>
              {["Время", "Тип", "Объем", "Символ", "Цена", "S / L", "T / P", "Цена", "Комиссия", "Своп"].map((h, i) => (
                <th key={i} className="border-r border-[#e3ebf5] p-0 pr-[5px] text-right font-normal">{h}</th>
              ))}
              <th className="p-0 pr-2.5 text-right font-normal">Прибыль</th>
            </tr>
          </thead>
          <tbody>
            <tr className="bg-[#c6c6c6] text-[17px] font-bold leading-7 text-black">
              <td colSpan={11} className="p-0 pl-1.5">
                <span className="flex items-center gap-2">
                  <span className="h-2 w-2 rounded-full border border-[#808080] bg-[#dcdcdc]" />
                  {"Баланс: 6 221 576.81 RUB  Средства: 6 221 576.81  Свободная маржа: 6 221 576.81"}
                </span>
              </td>
              <td className="p-0 pr-2 text-right">0.00</td>
            </tr>
          </tbody>
        </table>
        <div className="mt-[3px] flex h-[29px] border-t border-black pl-0.5 text-[16px] leading-[26px] text-[#7d7d7d]">
          <button className="-mt-px h-[28px] w-[93px] border border-t-0 border-r-2 border-b-2 border-black bg-white text-black">
            Торговля
          </button>
          {TABS.map((t) => (
            <button key={t} className="flex h-[27px] items-center whitespace-nowrap">
              <span className="flex items-baseline px-2.5">
                {t}
                {t === "Почта" && (
                  <span className="pl-[3px] pt-1 font-['Liberation_Sans',sans-serif] text-[13px] font-bold leading-none text-[#f01020]">1</span>
                )}
              </span>
              <span className="h-5 w-px bg-[#666]" />
            </button>
          ))}
        </div>
      </div>
    </div>
  );
}

function StatusBar() {
  const cell = "flex items-center border-l border-[#a0a0a0] pl-[5px]";
  return (
    <footer className="flex h-[25px] shrink-0 items-stretch whitespace-nowrap border-t border-white bg-[#f0f0f0] pb-px pt-0.5 text-[16px] leading-[22px] text-[#111]">
      <div className="flex w-[325px] items-center pl-0.5">Для вызова справки нажмите F1</div>
      <div className={`${cell} w-[171px]`}>Default</div>
      <div className={`${cell} w-[149px]`}>2018.08.17 02:35</div>
      <div className={`${cell} w-[103px]`}>O: 1.13744</div>
      <div className={`${cell} w-[102px]`}>H: 1.13758</div>
      <div className={`${cell} w-[98px]`}>L: 1.13741</div>
      <div className={`${cell} w-[101px]`}>C: 1.13751</div>
      <div className={`${cell} w-[98px]`}>V: 70</div>
      <div className="flex flex-1 items-center gap-1 border-l border-[#a0a0a0] pl-[3px]">
        <svg width="24" height="16" viewBox="0 0 24 16" shapeRendering="crispEdges">
          <path d="M1 1v12M4 1v12M7 2v11M10 2v11M13 2v11M16 3v10M19 3v10M22 3v10" stroke="#3f6a1e" strokeWidth="2" />
          <path d="M0 13.500h15" stroke="#204018" />
        </svg>
        6533/68 kb
      </div>
      <svg width="12" height="20" viewBox="0 0 12 20" className="self-end">
        <path d="M9 17h2v2H9zM5 17h2v2H5zM1 17h2v2H1zM9 13h2v2H9zM5 13h2v2H5zM9 9h2v2H9z" fill="#a8a8a8" />
      </svg>
    </footer>
  );
}

export default function App() {
  return (
    <div className={`flex h-screen flex-col overflow-hidden border-t border-[#a87860] bg-[#cf9b7c] ${UI}`}>
      <header className="flex h-[34px] shrink-0 items-start">
        <div className="w-[59px] pl-2.5 pt-1.5">
          <svg width="18" height="20" viewBox="0 0 18 20" fill="none">
            <path d="M4 4 14 2v5l1 8-8 2-5-1z" fill="#22ee44" />
            <path d="M12 2.500C7 0 8 8 5.500 14.500c-.7 2-2.500 2-4 1M4 7h7" stroke="#111" strokeWidth="1.500" />
            <path d="M14.500 8.500c-3-1.500-5.500 1-5.500 4s3 3.500 5.500 1" stroke="#111" strokeWidth="1.500" />
          </svg>
        </div>
        <h1 className="flex-1 pl-[68px] pt-1.5 text-center text-[17px] leading-6 text-[#333]">
          3009720: ForexChief-DirectFX - EURUSD,M5
        </h1>
        <div className="flex items-start pr-[3px]">
          <button aria-label="Свернуть" className="flex h-[25px] w-8 items-center justify-center pt-2.5">
            <span className="h-0.5 w-[14px] bg-[#222]" />
          </button>
          <button aria-label="Развернуть" className="flex h-[25px] w-[31px] items-center justify-center">
            <span className="h-3 w-[15px] border border-t-[3px] border-[#222]" />
          </button>
          <button aria-label="Закрыть" className="ml-0.5 flex h-[25px] w-14 items-center justify-center bg-[#c75050]">
            <svg width="11" height="9" viewBox="0 0 11 9"><path d="M1 0l9 9M10 0L1 9" stroke="#fff" strokeWidth="2.500" /></svg>
          </button>
        </div>
      </header>
      <div className="mb-1 ml-[7px] mr-1 flex min-h-0 flex-1 flex-col border-l border-t border-[#b08468] bg-[#f0f0f0]">
        <nav className="flex h-[26px] shrink-0 items-center gap-[22px] pl-2 text-[16px] leading-6 text-[#111]">
          {MENU.map((m) => (
            <a key={m} href="#menu">
              {m}
            </a>
          ))}
        </nav>
        <div className="h-0.5 shrink-0 border-b border-white bg-[#a0a0a0]" />
        <Toolbars />
        <div className="h-0.5 shrink-0 border-t border-[#a0a0a0] bg-[#696969]" />
        <main className="flex min-h-0 flex-1 border-b-2 border-white bg-[#a0a0a0] px-0.5">
          <ChartWindow active={false} plot={<NarrowPlot />} first={181} step={33.4} count={14} price={[1.14105, 0.0005]} priceTop={361} />
          <ChartWindow
            active
            plot={<WidePlot />}
            panel={<ServerPanel />}
            first={189}
            step={35.25}
            count={13}
            price={[1.13885, 0.00035]}
            priceTop={243}
          />
        </main>
        <div className="flex h-5 shrink-0 border-b border-b-white border-t border-t-black text-[16px] leading-6 text-[#7d7d7d]">
          <button className="h-[17px] w-[122px] overflow-hidden text-center leading-6">EURUSD M5</button>
          <button className="-mt-px h-[19px] w-[116px] overflow-hidden border border-r-2 border-t-0 border-black bg-white text-center leading-[26px] text-black">
            EURUSD M5
          </button>
          <div className="ml-auto flex items-center gap-4 pb-0.5 pr-2.5">
            <button aria-label="Назад"><svg width="4" height="7" viewBox="0 0 4 7" className="block"><path d="M4 0v7L0 3.500z" fill="#909090" /></svg></button>
            <button aria-label="Вперед"><svg width="4" height="7" viewBox="0 0 4 7" className="block"><path d="M0 0v7l4-3.500z" fill="#909090" /></svg></button>
          </div>
        </div>
        <div className="h-[4px] shrink-0" />
        <Terminal />
        <div className="h-px shrink-0 bg-[#a0a0a0]" />
        <StatusBar />
      </div>
    </div>
  );
}
